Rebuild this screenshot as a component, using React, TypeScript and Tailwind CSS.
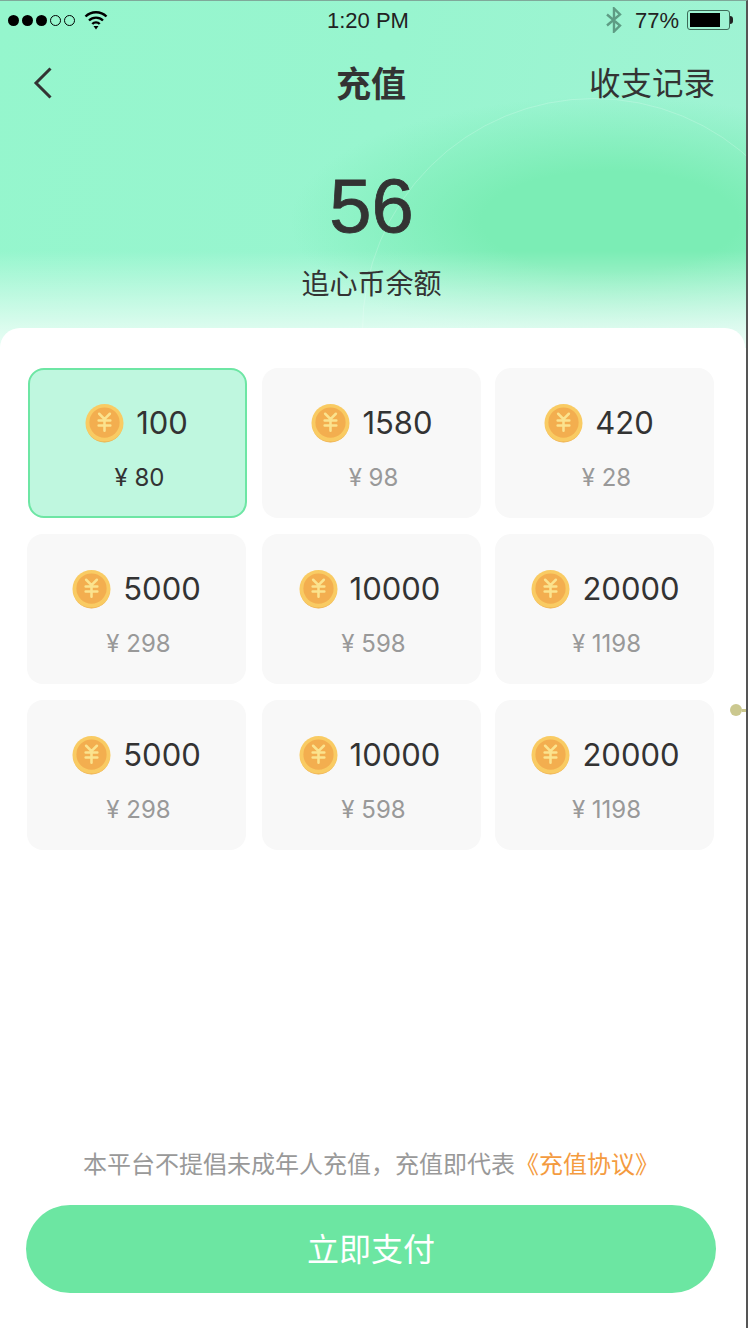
const packages = [
  { coins: '100', price: '80', active: true, nudge: 'pr-[2px]' },
  { coins: '1580', price: '98', nudge: 'pl-[1px]' },
  { coins: '420', price: '28', nudge: 'pr-[11px]' },
  { coins: '5000', price: '298' },
  { coins: '10000', price: '598', nudge: 'pr-[4px]' },
  { coins: '20000', price: '1198', nudge: 'pl-[2px]' },
  { coins: '5000', price: '298' },
  { coins: '10000', price: '598', nudge: 'pr-[4px]' },
  { coins: '20000', price: '1198', nudge: 'pl-[2px]' },
];

function Coin() {
  return (
    <svg width="39" height="40" viewBox="0 0 40 40" className="shrink-0">
      <circle cx="20" cy="20" r="19.5" fill="#F9CB63" />
      <path d="M1 21a19 19 0 0 0 38 0a19 18 0 0 1-38 0z" fill="#EFAE45" />
      <circle cx="20" cy="19.500" r="15.500" fill="#F3AE4F" />
      <path
        d="M14.500 10.500 20 16l5.500-5.500M14 17.500h12M14 22.500h12M20 16v12"
        fill="none"
        stroke="#FBE38E"
        strokeWidth="2.600"
        strokeLinecap="round"
        strokeLinejoin="round"
      />
    </svg>
  );
}

function StatusBar() {
  return (
    <div className="grid h-[38px] grid-cols-3 items-center pl-2 pr-[13px] text-[22px] text-[#222]">
      <div className="flex items-center">
        <div className="flex gap-[3px]">
          <span className="h-[11px] w-[11px] rounded-full bg-black" />
          <span className="h-[11px] w-[11px] rounded-full bg-black" />
          <span className="h-[11px] w-[11px] rounded-full bg-black" />
          <span className="h-[11px] w-[11px] rounded-full border border-black" />
          <span className="h-[11px] w-[11px] rounded-full border border-black" />
        </div>
        <svg width="24" height="20" viewBox="0 0 24 20" className="ml-[9px]">
          <path d="M1.500 6.500a15 15 0 0 1 21 0M5 10.500a10 10 0 0 1 14 0M8.300 14a5 5 0 0 1 7.400 0" fill="none" stroke="#000" strokeWidth="2.400" />
          <path d="M9.500 16h5L12 19.500z" fill="#000" />
        </svg>
      </div>
      <div className="pr-[5px] text-center">1:20 PM</div>
      <div className="flex items-center justify-end">
        <svg width="18" height="26" viewBox="0 0 18 26" className="mr-[12px]">
          <path d="M2 7.500 15 18.500 9 24.500V1.500L15 7.500 2 18.500" fill="none" stroke="#5E9C84" strokeWidth="2.400" />
        </svg>
        <span>77%</span>
        <div className="ml-2 flex items-center">
          <div className="h-[20px] w-[43px] rounded-[3px] border border-[#3d6b58] p-[2px]">
            <div className="h-full w-[30px] bg-black" />
          </div>
          <div className="h-[8px] w-[3px] rounded-r-sm bg-[#222]" />
        </div>
      </div>
    </div>
  );
}

export default function App() {
  return (
    <div className="flex h-[1328px] w-[748px] flex-col overflow-hidden border-t border-r-2 border-t-[#7fa99a] border-r-[#555] bg-white font-['Liberation_Sans','Noto_Sans_CJK_SC',sans-serif] text-[#333]">
      {/* 顶部渐变 */}
      <header className="relative h-[347px] shrink-0 overflow-hidden bg-[linear-gradient(100deg,#95F6CD_0%,#98F5CF_50%,#A0F3D4_100%)]">
        <div className="absolute inset-0 bg-[radial-gradient(ellipse_320px_125px_at_610px_220px,#7BEDB5_40%,rgba(123,237,181,0)_100%)]" />
        <div className="absolute left-[362px] top-[97px] h-[464px] w-[464px] rounded-full border border-white/20" />
        <div className="absolute inset-0 bg-[linear-gradient(180deg,rgba(255,255,255,0)_72%,rgba(255,255,255,0.66)_94%,rgba(255,255,255,0.8)_100%)]" />
        <div className="relative">
          <StatusBar />
          <nav className="grid h-[92px] grid-cols-3 items-center pl-[27px] pr-[31px]">
            <svg width="24" height="34" viewBox="0 0 24 34" className="-mt-[4px] ml-[5px]">
              <path d="M18.500 2.500 4 17l14.500 14.500" fill="none" stroke="#333" strokeWidth="3" />
            </svg>
            <h1 className="text-center text-[35px] font-bold">充值</h1>
            <div className="text-right text-[31.500px]">收支记录</div>
          </nav>
          <div className="mt-[33px] flex flex-col items-center pr-[3px]">
            <div className="text-[76px] leading-[84px] [-webkit-text-stroke:0.8px_#333]">56</div>
            <div className="mt-[18px] text-[28px] leading-[38px]">追心币余额</div>
          </div>
        </div>
      </header>

      {/* 套餐 */}
      <main className="relative z-10 -mt-[20px] mr-[1px] flex flex-1 flex-col rounded-t-[20px] bg-white px-[27px] pt-[40px]">
        <div className="grid grid-cols-[235px_233px_219px] gap-y-[16px]">
          {packages.map((p, i) => (
            <div
              key={i}
              className={
                p.active
                  ? 'ml-[1px] flex h-[150px] w-[219px] flex-col items-center rounded-[16px] border-2 border-[#6DE6A4] bg-[#BFF7DF] pt-[33px]'
                  : 'flex h-[150px] w-[219px] flex-col items-center rounded-[16px] bg-[#F8F8F8] pt-[35px]'
              }
            >
              <div className={`flex h-[40px] items-center gap-[12px] ${p.nudge ?? ''}`}>
                <Coin />
                <span className="font-['Inter'] text-[31px] text-[#333]">{p.coins}</span>
              </div>
              <div className={p.active ? "mt-[18px] pl-[4px] font-['Inter'] text-[24px] leading-[34px] text-[#333]" : "mt-[18px] pl-[4px] font-['Inter'] text-[24px] leading-[34px] text-[#999]"}>
                ¥ {p.price}
              </div>
            </div>
          ))}
        </div>

        <div className="mt-auto pr-[3px] text-center text-[24px] leading-[34px] text-[#999]">
          本平台不提倡未成年人充值，充值即代表<span className="text-[#F49B3F]">《充值协议》</span>
        </div>
        <button className="mb-[35px] -ml-[1px] mt-[23px] h-[88px] w-[690px] rounded-full bg-[#6CE6A2] pt-[1px] text-[32px] text-white">
          立即支付
        </button>

        {/* 滑块 */}
        <div className="absolute left-[730px] top-[376px] flex items-center">
          <span className="h-[12px] w-[12px] rounded-full bg-[#CBC88F]" />
          <span className="h-[3px] w-[4px] bg-[#CBC88F]" />
        </div>
      </main>
    </div>
  );
}
